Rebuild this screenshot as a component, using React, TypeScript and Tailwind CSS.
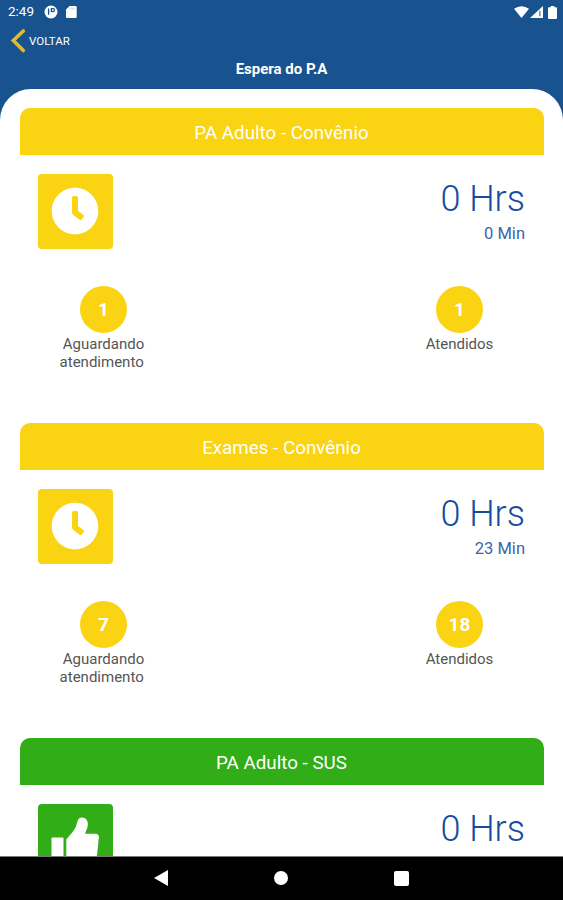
import { FaClock } from 'react-icons/fa';

type Queue = {
  title: string;
  status: 'busy' | 'ok';
  hours: number;
  minutes?: number;
  waiting?: number;
  served?: number;
};

const queues: Queue[] = [
  { title: 'PA Adulto - Convênio', status: 'busy', hours: 0, minutes: 0, waiting: 1, served: 1 },
  { title: 'Exames - Convênio', status: 'busy', hours: 0, minutes: 23, waiting: 7, served: 18 },
  { title: 'PA Adulto - SUS', status: 'ok', hours: 0 },
];

function StatusBar() {
  return (
    <div className="flex h-6 items-center justify-between pl-2 pr-[6px] text-white">
      <div className="flex items-center">
        <span className="w-9 text-[13.5px] leading-none">2:49</span>
        <svg width="14" height="14" viewBox="0 0 14 14">
          <circle cx="7" cy="7" r="6.5" fill="#fff" />
          <path d="M4.6 3.4v6.4M7.4 3v4" stroke="#17528f" strokeWidth="1.3" />
          <path d="M8 3.6h1a1.5 1.5 0 0 1 0 3H7.6" fill="none" stroke="#17528f" strokeWidth="1.2" />
        </svg>
        <svg width="11" height="12" viewBox="0 0 11 12" className="ml-2">
          <path d="M3.6 0H9.5Q10.7 0 10.7 1.2V10.8Q10.7 12 9.5 12H1.2Q0 12 0 10.8V3.6z" fill="#fff" />
          <path d="M4 1.6v2M6.1 1.6v2M8.2 1.6v2" stroke="#a9bfd8" strokeWidth="0.8" />
        </svg>
      </div>
      <div className="flex items-center">
        <svg width="15" height="12" viewBox="0 0 15 12">
          <path d="M0 2.7Q7.5-2.3 15 2.7L7.5 12z" fill="#fff" />
        </svg>
        <svg width="13" height="12" viewBox="0 0 13 12" className="ml-px">
          <path d="M13 0v12H0z" fill="#fff" />
          <path d="M9.9 4.8v5.4" stroke="#17528f" strokeWidth="1" />
        </svg>
        <svg width="9" height="13" viewBox="0 0 9 13" className="ml-[5px]">
          <path d="M2.7 0h3.6v1.3H8Q9 1.3 9 2.3V12Q9 13 8 13H1Q0 13 0 12V2.3Q0 1.3 1 1.3h1.7z" fill="#fff" />
        </svg>
      </div>
    </div>
  );
}

function ThumbIcon() {
  return (
    <svg width="48" height="48" viewBox="0 0 48 48" fill="#fff">
      <path d="M1.5 20.5h10a1 1 0 0 1 1 1v23a1 1 0 0 1-1 1h-10a1 1 0 0 1-1-1v-23a1 1 0 0 1 1-1z" />
      <path d="M15.3 22.5C18 18.5 22 15.5 24.5 10.5C26.5 6.5 26 .6 31 .6C34.5 .6 37 3.5 36.9 7.5C36.8 11.5 34.6 13.5 34.2 16.8H44.5C47 16.8 48.3 18.7 47.9 21C47.6 22.6 47.2 23.5 47.4 25C47.6 27 46.7 28.3 46.9 30C47.1 32 46.2 33.5 46.3 35C46.5 40 43 45.5 37 45.5H27C22 45.5 18.5 43 15.3 42.5z" />
    </svg>
  );
}

function Counter({ value, color, children }: { value?: number; color: string; children: React.ReactNode }) {
  return (
    <div className="flex w-[130px] flex-col items-center">
      <div className={`flex size-[47px] items-center justify-center rounded-full pt-px text-[19px] font-bold text-white ${color}`}>
        {value}
      </div>
      <div className="mt-[2px] whitespace-pre text-center text-[15px] leading-[18px] text-[#555]">{children}</div>
    </div>
  );
}

function QueueCard({ queue }: { queue: Queue }) {
  const color = queue.status === 'busy' ? 'bg-[#fad312]' : 'bg-[#31ad17]';

  return (
    <section className="h-[315px] shrink-0">
      <h2 className={`flex h-[46.5px] items-center justify-center rounded-t-[10px] pt-[3px] text-[18.8px] text-white ${color}`}>
        {queue.title}
      </h2>
      <div className="flex justify-between px-[18.5px] pt-[19px]">
        <div className={`flex size-[75px] items-center justify-center rounded-[4px] pr-px ${color}`}>
          {queue.status === 'busy' ? <FaClock className="size-12 text-white" /> : <ThumbIcon />}
        </div>
        <div className="pt-[4px] text-right text-[#164c9f]">
          <p className="text-[36px] font-light leading-[42px]">{queue.hours} Hrs</p>
          {queue.minutes !== undefined && (
            <p className="mt-[4px] text-[16.5px] leading-5 text-[#3965ac]">{queue.minutes} Min</p>
          )}
        </div>
      </div>
      {queue.waiting !== undefined && (
        <div className="flex justify-between px-[19px] pt-[37.5px]">
          <Counter value={queue.waiting} color={color}>
            {'Aguardando\natendimento '}
          </Counter>
          <Counter value={queue.served} color={color}>
            Atendidos
          </Counter>
        </div>
      )}
    </section>
  );
}

export default function App() {
  return (
    <div className="flex h-[900px] w-full flex-col overflow-hidden bg-[#18538f] font-[Roboto,sans-serif]">
      <header className="h-[88.5px] shrink-0 text-white">
        <StatusBar />
        <button className="flex h-[34px] items-center pl-[10px] text-[11.5px]">
          <svg width="16" height="26" viewBox="0 0 16 26" fill="none" stroke="#e6b821" strokeWidth="3.6">
            <path d="M13.3 3L3.3 12.5l10 10" strokeLinecap="round" />
          </svg>
          <span className="ml-[3px] pt-px">VOLTAR</span>
        </button>
        <h1 className="text-center text-[15px] font-bold leading-[22px]">Espera do P.A</h1>
      </header>
      <main className="flex min-h-0 flex-1 flex-col overflow-hidden rounded-t-[31px] bg-white px-[19.5px] pt-[19.5px]">
        {queues.map((queue) => (
          <QueueCard key={queue.title} queue={queue} />
        ))}
      </main>
      <nav className="flex h-[44.5px] shrink-0 items-center justify-center gap-[106px] border-t border-[#777] bg-black">
        <svg width="14" height="16" viewBox="0 0 14 16" fill="#fff">
          <path d="M14 0v16L0 8z" />
        </svg>
        <span className="size-[14px] rounded-full bg-white" />
        <span className="size-[15px] rounded-[2px] bg-white" />
      </nav>
    </div>
  );
}
